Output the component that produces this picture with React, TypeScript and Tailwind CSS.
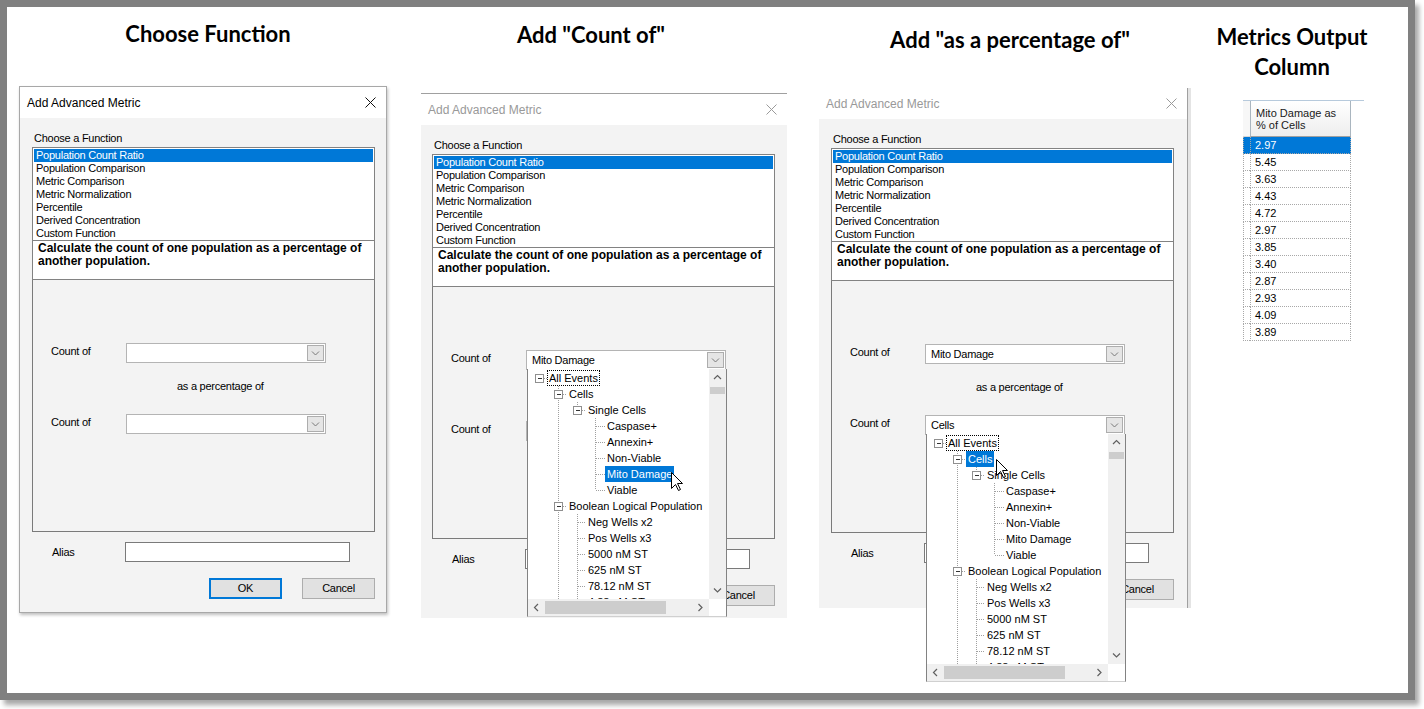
import React from "react";

const FUNCTIONS = [
  "Population Count Ratio",
  "Population Comparison",
  "Metric Comparison",
  "Metric Normalization",
  "Percentile",
  "Derived Concentration",
  "Custom Function",
];

const OUTPUT = ["2.97", "5.45", "3.63", "4.43", "4.72", "2.97", "3.85", "3.40", "2.87", "2.93", "4.09", "3.89"];

type TreeNode = {
  label: string;
  level: number;
  box?: boolean;
  guides: number[];
  conn: "full" | "half" | "none";
};

const TREE: TreeNode[] = [
  { label: "All Events", level: 0, box: true, guides: [], conn: "none" },
  { label: "Cells", level: 1, box: true, guides: [], conn: "full" },
  { label: "Single Cells", level: 2, box: true, guides: [1], conn: "half" },
  { label: "Caspase+", level: 3, guides: [1], conn: "full" },
  { label: "Annexin+", level: 3, guides: [1], conn: "full" },
  { label: "Non-Viable", level: 3, guides: [1], conn: "full" },
  { label: "Mito Damage", level: 3, guides: [1], conn: "full" },
  { label: "Viable", level: 3, guides: [1], conn: "half" },
  { label: "Boolean Logical Population", level: 1, box: true, guides: [], conn: "full" },
  { label: "Neg Wells x2", level: 2, guides: [1], conn: "full" },
  { label: "Pos Wells x3", level: 2, guides: [1], conn: "full" },
  { label: "5000 nM ST", level: 2, guides: [1], conn: "full" },
  { label: "625 nM ST", level: 2, guides: [1], conn: "full" },
  { label: "78.12 nM ST", level: 2, guides: [1], conn: "full" },
  { label: "4.88 nM ST", level: 2, guides: [1], conn: "full" },
];

// x of the connector column and of the label, per tree level
const COLS = [11, 30, 49, 67];
const TEXTX = [21, 41, 60, 79];

function Chevron({ dir, color = "#606060", width = 1.2 }: { dir: "up" | "down" | "left" | "right"; color?: string; width?: number }) {
  if (dir === "up" || dir === "down") {
    const pts = dir === "up" ? "1,5 4.5,1.5 8,5" : "1,1.5 4.5,5 8,1.5";
    return (
      <svg width="9" height="7" viewBox="0 0 9 7">
        <polyline points={pts} fill="none" stroke={color} strokeWidth={width} />
      </svg>
    );
  }
  const pts = dir === "left" ? "5,1 1.5,4.5 5,8" : "1.5,1 5,4.5 1.5,8";
  return (
    <svg width="7" height="9" viewBox="0 0 7 9">
      <polyline points={pts} fill="none" stroke={color} strokeWidth={width} />
    </svg>
  );
}

function CloseX({ color }: { color: string }) {
  return (
    <svg width="11" height="11" viewBox="0 0 11 11">
      <line x1="0.5" y1="0.5" x2="10.5" y2="10.5" stroke={color} strokeWidth="1" />
      <line x1="10.5" y1="0.5" x2="0.5" y2="10.5" stroke={color} strokeWidth="1" />
    </svg>
  );
}

function Cursor() {
  return (
    <svg width="13" height="20" viewBox="0 0 13 20">
      <path d="M0.5,0.5 L0.5,16.5 L4.5,12.5 L7.5,18.5 L9.5,17.5 L6.5,11.5 L11.5,11.5 Z" fill="white" stroke="black" strokeWidth="1" />
    </svg>
  );
}

function TreeRow({ node, selected, cursorClass }: { node: TreeNode; selected: string; cursorClass: string }) {
  const c = COLS[node.level];
  const tx = TEXTX[node.level];
  const isSel = node.label === selected;
  const dot = { stroke: "#a0a0a0", strokeDasharray: "1 1", strokeWidth: 1 };
  return (
    <div className="relative h-[16px] whitespace-nowrap">
      <svg className="absolute left-0 top-0" width="181" height="16">
        {node.guides.map((g) => (
          <line key={g} x1={COLS[g] + 0.5} y1={0} x2={COLS[g] + 0.5} y2={16} {...dot} />
        ))}
        {node.conn !== "none" && <line x1={c + 0.5} y1={0} x2={c + 0.5} y2={node.conn === "full" ? 16 : 8} {...dot} />}
        <line x1={node.box ? c + 5 : c + 1} y1={8.5} x2={tx - 2} y2={8.5} {...dot} />
        {node.box && (
          <>
            <rect x={c - 3.5} y={4.5} width={8} height={8} fill="white" stroke="#8f8f8f" strokeWidth="1" />
            <line x1={c - 1} y1={8.5} x2={c + 3} y2={8.5} stroke="#333" strokeWidth="1" />
          </>
        )}
      </svg>
      <span
        style={{ marginLeft: tx - 2 }}
        className={
          "relative inline-block h-[16px] px-[2px] leading-[16px] " +
          (isSel ? "bg-[#0078d7] text-white " : "text-black ") +
          (node.level === 0 ? "outline-1 outline-dotted outline-black -outline-offset-1" : "")
        }
      >
        {node.label}
        {isSel && (
          <span className={"absolute z-20 " + cursorClass}>
            <Cursor />
          </span>
        )}
      </span>
    </div>
  );
}

function TreeDrop({ selected, cursorClass }: { selected: string; cursorClass: string }) {
  return (
    <div className="absolute left-0 top-full z-10 flex h-[248px] w-[200px] flex-col border-x border-b border-x-[#828282] border-b-[#d0d0d0] bg-white text-[11px] tracking-normal">
      <div className="flex min-h-0 flex-1">
        <div className="flex-1 overflow-hidden pt-px">
          {TREE.map((n) => (
            <TreeRow key={n.label} node={n} selected={selected} cursorClass={cursorClass} />
          ))}
        </div>
        <div className="flex w-[17px] flex-col items-center bg-[#f0f0f0]">
          <div className="flex h-[17px] items-center justify-center">
            <Chevron dir="up" />
          </div>
          <div className="mt-px h-[7px] w-[15px] bg-[#cdcdcd]" />
          <div className="flex-1" />
          <div className="flex h-[17px] items-center justify-center">
            <Chevron dir="down" />
          </div>
        </div>
      </div>
      <div className="flex h-[17px]">
        <div className="flex w-[181px] items-center bg-[#f0f0f0]">
          <div className="flex w-[17px] justify-center">
            <Chevron dir="left" />
          </div>
          <div className="h-[13px] w-[121px] bg-[#cdcdcd]" />
          <div className="flex-1" />
          <div className="flex w-[17px] justify-center">
            <Chevron dir="right" />
          </div>
        </div>
        <div className="flex-1 bg-white" />
      </div>
    </div>
  );
}

function Combo({ text, tree }: { text?: string; tree?: React.ReactNode }) {
  return (
    <div className="relative flex h-[20px] w-[200px] items-center border border-[#b4b4b4] bg-white">
      <span className="flex-1 pl-[5px] leading-[13px]">{text}</span>
      <div className="mr-px flex h-[16px] w-[17px] items-center justify-center border border-[#adadad] bg-[#e5e5e5]">
        <Chevron dir="down" color="#7a7a7a" width={1} />
      </div>
      {tree}
    </div>
  );
}

type DialogProps = {
  active: boolean;
  width: string;
  bodyPad: string;
  frame: string;
  pb: string;
  combo1?: string;
  combo2?: string;
  tree1?: React.ReactNode;
  tree2?: React.ReactNode;
};

function Dialog({ active, width, bodyPad, frame, pb, combo1, combo2, tree1, tree2 }: DialogProps) {
  return (
    <div className={"flex flex-col font-['Liberation_Sans',Arial,sans-serif] text-[11px] tracking-[-0.25px] text-black " + width + " " + frame}>
      <div className="flex h-[31px] items-center justify-between bg-white pl-[7px] pr-[10px]">
        <span className={"text-[12px] tracking-normal " + (active ? "text-black" : "text-[#999999]")}>Add Advanced Metric</span>
        <CloseX color={active ? "#111111" : "#9a9a9a"} />
      </div>
      <div className={"flex flex-1 flex-col bg-[#f3f3f3] pt-[14px] " + bodyPad + " " + pb}>
        <div className="pl-[2px] leading-[13px]">Choose a Function</div>
        <div className="mt-[2px] h-[94px] w-[343px] border border-[#828282] bg-white p-px pb-0">
          {FUNCTIONS.map((f, i) => (
            <div key={f} className={"h-[13px] pl-[2px] leading-[13px] " + (i === 0 ? "bg-[#0078d7] text-white" : "")}>
              {f}
            </div>
          ))}
        </div>
        <div className="h-[39px] w-[343px] border-x border-b border-[#828282] bg-white px-[5px] pt-[1px] text-[12px] font-bold leading-[13px] tracking-normal">
          Calculate the count of one population as a percentage of another population.
        </div>
        <div className="h-[252px] w-[343px] border-x border-b border-[#7a7a7a] pt-[63px]">
          <div className="flex items-start pl-[18px]">
            <div className="mt-[2px] w-[75px] leading-[13px]">Count of</div>
            <Combo text={combo1} tree={tree1} />
          </div>
          <div className="mt-[17px] pl-[144px] leading-[13px]">as a percentage of</div>
          <div className="mt-[21px] flex items-start pl-[18px]">
            <div className="mt-[2px] w-[75px] leading-[13px]">Count of</div>
            <Combo text={combo2} tree={tree2} />
          </div>
        </div>
        <div className="mt-[10px] flex items-center pl-[20px]">
          <div className="w-[73px] leading-[13px]">Alias</div>
          <div className="h-[20px] w-[225px] border border-[#7a7a7a] bg-white" />
        </div>
        <div className="mt-[16px] flex w-[343px] justify-end gap-[20px]">
          <div className="flex h-[21px] w-[73px] items-center justify-center border-2 border-[#0078d7] bg-[#e1e1e1]">OK</div>
          <div className="flex h-[21px] w-[73px] items-center justify-center border border-[#adadad] bg-[#e1e1e1]">Cancel</div>
        </div>
      </div>
    </div>
  );
}

function Heading({ children, className }: { children: React.ReactNode; className: string }) {
  return (
    <div className={"text-center font-['Lato',sans-serif] text-[22px] font-bold leading-[30px] text-black " + className}>
      {children}
    </div>
  );
}

function OutputColumn() {
  return (
    <div className="mt-[18px] w-[121px] font-['Liberation_Sans',Arial,sans-serif] text-[11px] text-black">
      <div className="h-px w-[121px] bg-[#b7cadc]" />
      <div className="flex h-[36px] w-[108px]">
        <div className="w-[7px] border-b border-[#d6d6d6] bg-[#f7f7f7]" />
        <div className="w-[101px] border-x border-b border-x-[#a9b5bf] border-b-[#a0a0a0] bg-gradient-to-b from-white to-[#eeeeee] pl-[5px] pt-[6px] leading-[12px] text-[#1a1a1a]">
          Mito Damage as
          <br />% of Cells
        </div>
      </div>
      {OUTPUT.map((v, i) => (
        <div key={i} className={"flex h-[17px] w-[108px] " + (i === 0 ? "bg-[#0078d7] text-white" : "")}>
          <div className="w-[7px] border-b border-l border-dotted border-[#a8a8a8]" />
          <div className="w-[101px] border-x border-b border-dotted border-[#a8a8a8] pl-[4px] leading-[16px]">{v}</div>
        </div>
      ))}
    </div>
  );
}

export default function App() {
  return (
    <div className="h-[709px] w-[1424px] overflow-hidden bg-white">
      <div className="h-[700px] w-[1415px] border-[7px] border-[#808080] bg-white shadow-[4px_5px_5px_rgba(0,0,0,0.35)]">
        <div className="flex items-start">
          {/* Choose Function */}
          <div className="ml-[12px] flex w-[368px] flex-col">
            <Heading className="mt-[12px] pl-[10px]">Choose Function</Heading>
            <div className="mt-[37px]">
              <Dialog
                active
                width="w-[368px]"
                bodyPad="pl-[12px] pr-[13px]"
                frame="border border-[#a8a8a8] shadow-[1px_2px_3px_rgba(0,0,0,0.25)]"
                pb="pb-[13px]"
              />
            </div>
          </div>

          {/* Add "Count of" */}
          <div className="ml-[34px] flex w-[366px] flex-col">
            <Heading className="mt-[13px] pr-[26px]">Add &quot;Count of&quot;</Heading>
            <div className="mt-[43px]">
              <Dialog
                active={false}
                width="w-[366px]"
                bodyPad="pl-[11px] pr-[12px]"
                frame="border-t border-[#a0a0a0]"
                pb="pb-[12px]"
                combo1="Mito Damage"
                tree1={<TreeDrop selected="Mito Damage" cursorClass="left-[66px] top-[6px]" />}
              />
            </div>
          </div>

          {/* Add "as a percentage of" */}
          <div className="ml-[32px] flex w-[372px] flex-col">
            <Heading className="mt-[18px] pl-[10px]">Add &quot;as a percentage of&quot;</Heading>
            <div className="mt-[33px] flex">
              <Dialog
                active={false}
                width="w-[368px]"
                bodyPad="pl-[12px] pr-[13px]"
                frame=""
                pb="pb-[8px]"
                combo1="Mito Damage"
                combo2="Cells"
                tree2={<TreeDrop selected="Cells" cursorClass="left-[30px] top-[8px]" />}
              />
              <div className="w-[4px] border-l border-[#a0a0a0] bg-[#e4e4e4]" />
            </div>
          </div>

          {/* Metrics Output Column */}
          <div className="ml-[52px] flex w-[121px] flex-col">
            <Heading className="-ml-[29px] mt-[15px] w-[156px]">
              Metrics Output
              <br />
              Column
            </Heading>
            <OutputColumn />
          </div>
        </div>
      </div>
    </div>
  );
}
